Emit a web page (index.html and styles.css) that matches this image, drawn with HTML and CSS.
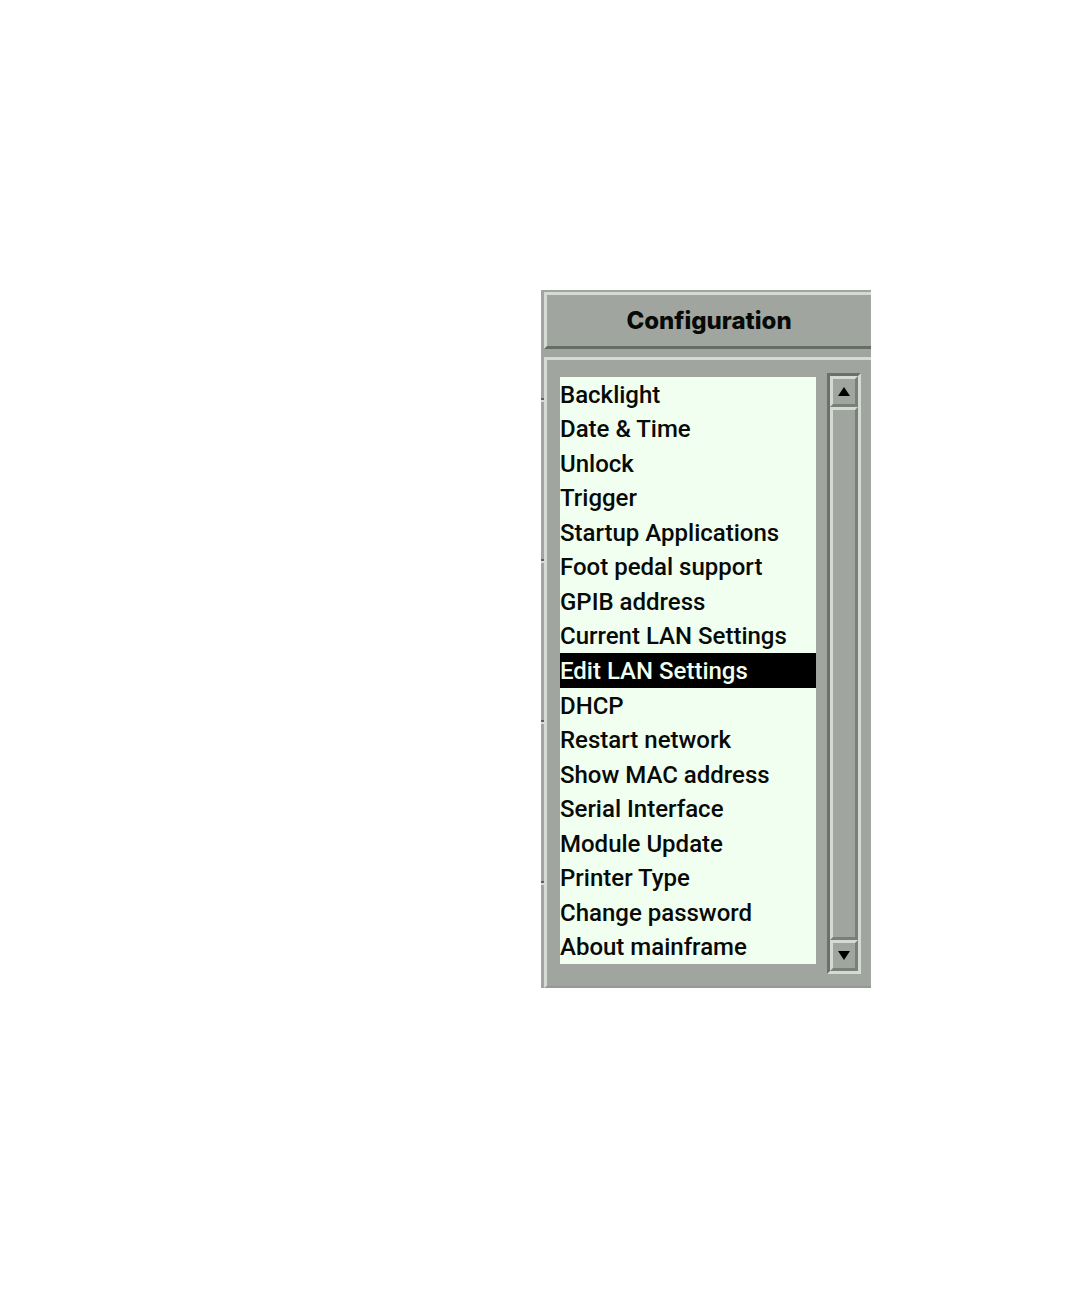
FILE: index.html
```
<!DOCTYPE html>
<html lang="en">
	<head>
		<meta charset="utf-8"/>
		<title>Configuration</title>
		<link rel="stylesheet" href="styles.css">
	</head>
	<body>
		<main class="screen">
			<!-- edges of the softkeys left of the panel -->
			<div class="softkeys">
				<div class="softkey first"></div>
				<div class="softkey"></div>
				<div class="softkey"></div>
				<div class="softkey"></div>
				<div class="softkey last"></div>
			</div>
			<div class="panel">
				<h1>Configuration</h1>
				<div class="content">
					<ul class="list">
						<li><button type="button">Backlight</button></li>
						<li><button type="button">Date &amp; Time</button></li>
						<li><button type="button">Unlock</button></li>
						<li><button type="button">Trigger</button></li>
						<li><button type="button">Startup Applications</button></li>
						<li><button type="button">Foot pedal support</button></li>
						<li><button type="button">GPIB address</button></li>
						<li><button type="button">Current LAN Settings</button></li>
						<li><button type="button" class="selected" aria-current="true">Edit LAN Settings</button></li>
						<li><button type="button">DHCP</button></li>
						<li><button type="button">Restart network</button></li>
						<li><button type="button">Show MAC address</button></li>
						<li><button type="button">Serial Interface</button></li>
						<li><button type="button">Module Update</button></li>
						<li><button type="button">Printer Type</button></li>
						<li><button type="button">Change password</button></li>
						<li><button type="button">About mainframe</button></li>
					</ul>
					<div class="scrollbar">
						<button type="button" class="arrow" aria-label="Scroll up">
							<svg width="12" height="9" viewBox="0 0 12 9"><path d="M6 0L12 9H0z"/></svg>
						</button>
						<div class="thumb"></div>
						<button type="button" class="arrow" aria-label="Scroll down">
							<svg width="12" height="9" viewBox="0 0 12 9"><path d="M0 0H12L6 9z"/></svg>
						</button>
					</div>
				</div>
			</div>
		</main>
	</body>
</html>
```
FILE: styles.css
```
body {
	margin: 0;
	padding: 290px 0 40px;
	background: #fff;
	color: #080a08;
	font-family: Roboto, "Liberation Sans", sans-serif;
}
.screen {
	display: flex;
	width: 330px;
	margin-left: calc(50% + 1px);
	background: #a0a69f;
}
.softkeys {
	display: flex;
	flex-direction: column;
	width: 3px;
}
.softkey {
	height: 161px;
	box-sizing: border-box;
	border-top: 2px solid #d5dad4;
	border-bottom: 2px solid #5c635b;
}
.softkey.first {
	height: 110px;
	border-top: none;
}
.softkey.last {
	flex: 1;
	border-bottom: none;
}
.panel {
	flex: 1;
	display: flex;
	flex-direction: column;
	gap: 8px;
	padding-top: 2px;
}
h1 {
	margin: 0;
	border: 3px solid #d5dad4;
	border-right: none;
	border-bottom-color: #656d65;
	font-family: Inter, "Liberation Sans", sans-serif;
	font-size: 24px;
	font-weight: 800;
	line-height: 51px;
	text-align: center;
}
.content {
	display: flex;
	gap: 11px;
	padding: 13px 10px 12px 13px;
	border-top: 3px solid #d5dad4;
	border-left: 3px solid #d5dad4;
	border-bottom: 2px solid #949b93;
}
.list {
	flex: 1;
	display: grid;
	grid-auto-rows: 1fr;
	height: 587px;
	margin: 4px 0 10px;
	padding: 0;
	background: #f0fff0;
	list-style: none;
}
.list button {
	display: block;
	width: 100%;
	height: 100%;
	padding: 1px 0 0;
	border: none;
	background: none;
	color: inherit;
	font: 500 24px Roboto, "Liberation Sans", sans-serif;
	text-align: left;
	white-space: nowrap;
}
.list .selected {
	background: #000;
	color: #f0fff0;
}
.scrollbar {
	display: flex;
	flex-direction: column;
	width: 28px;
	border: 3px solid;
	border-color: #697169 #d5dad4 #d5dad4 #697169;
}
.arrow, .thumb {
	box-sizing: border-box;
	border: 3px solid;
	border-color: #d5dad4 #788078 #788078 #d5dad4;
}
.arrow {
	display: flex;
	align-items: center;
	justify-content: center;
	height: 31px;
	padding: 0;
	background: #a0a69f;
}
.thumb {
	flex: 1;
}
```
